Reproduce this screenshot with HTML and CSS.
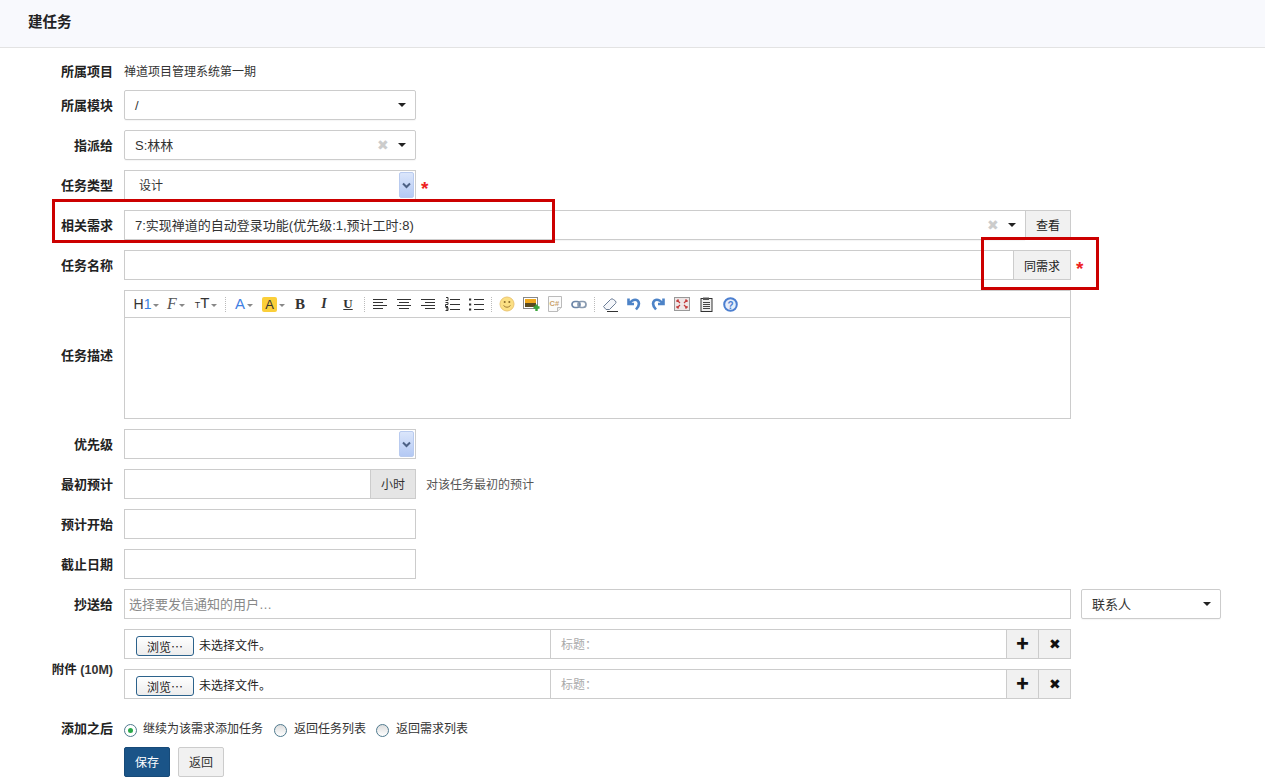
FILE: index.html
```html
<!DOCTYPE html>
<html lang="zh-CN">
<head>
<meta charset="utf-8">
<title>建任务</title>
<link rel="stylesheet" href="styles.css">
</head>
<body>
<header class="titlebar"><h1 class="title">建任务</h1></header>
<main class="form">
  <div class="label label-plain">所属项目</div>
  <div class="value-text">禅道项目管理系统第一期</div>

  <div class="label">所属模块</div>
  <div class="chosen narrow"><span class="chosen-text">/</span><span class="caret"></span></div>

  <div class="label">指派给</div>
  <div class="chosen narrow"><span class="chosen-text">S:林林</span><span class="clear">✖</span><span class="caret"></span></div>

  <div class="label">任务类型</div>
  <div class="line">
    <div class="native narrow"><span class="native-text">设计</span><span class="native-arrow"><svg width="9" height="7" viewBox="0 0 9 7"><path d="M1 1.500l3.500 3.500L8 1.500" fill="none" stroke="#4d6185" stroke-width="2"/></svg></span></div>
    <span class="req">*</span>
  </div>

  <div class="label">相关需求</div>
  <div class="group">
    <div class="chosen grow joined"><span class="chosen-text">7:实现禅道的自动登录功能(优先级:1,预计工时:8)</span><span class="clear">✖</span><span class="caret"></span></div>
    <div class="addon w46">查看</div>
  </div>

  <div class="label">任务名称</div>
  <div class="line">
    <div class="group">
      <div class="box grow joined"></div>
      <div class="addon w58">同需求</div>
    </div>
    <span class="req req-abs">*</span>
  </div>

  <div class="label label-editor">任务描述</div>
  <div class="editor">
    <div class="toolbar">
      <span class="tb wide"><span class="t-h">H<b>1</b></span><i class="mini"></i></span>
      <span class="tb wide"><span class="t-f">F</span><i class="mini"></i></span>
      <span class="tb wide"><span class="t-t"><small>T</small>T</span><i class="mini"></i></span>
      <span class="sep"></span>
      <span class="tb wide"><span class="t-a">A</span><i class="mini"></i></span>
      <span class="tb wide w29"><span class="t-hl">A</span><i class="mini"></i></span>
      <span class="tb"><span class="t-b">B</span></span>
      <span class="tb"><span class="t-i">I</span></span>
      <span class="tb"><span class="t-u">U</span></span>
      <span class="sep"></span>
      <span class="tb"><svg width="16" height="12" viewBox="0 0 16 12" class="ln"><path d="M1 1.500h14M1 4.500h10M1 7.500h14M1 10.500h10"/></svg></span>
      <span class="tb"><svg width="16" height="12" viewBox="0 0 16 12" class="ln"><path d="M1 1.500h14M3 4.500h10M1 7.500h14M3 10.500h10"/></svg></span>
      <span class="tb"><svg width="16" height="12" viewBox="0 0 16 12" class="ln"><path d="M1 1.500h14M5 4.500h10M1 7.500h14M5 10.500h10"/></svg></span>
      <span class="tb"><svg width="15" height="14" viewBox="0 0 15 14" class="ln"><path d="M5 2.500h10M5 7.500h10M5 12.500h10"/><path d="M1 .5h2v3M.5 3.500H3M.5 5.500h2.500v2H.5v2H3M.5 10.500H3v1.500H1M3 12v1.500H.5" stroke-width=".8"/></svg></span>
      <span class="tb"><svg width="15" height="14" viewBox="0 0 15 14" class="ln"><path d="M5 2.500h10M5 7.500h10M5 12.500h10"/><path d="M1 1.500v2M1 6.500v2M1 11.500v2" class="dots"/></svg></span>
      <span class="sep w7"></span>
      <span class="tb"><svg width="16" height="16" viewBox="0 0 16 16"><circle cx="8" cy="8" r="7" fill="#fbdf83" stroke="#ebc572"/><circle cx="5.700" cy="6" r="1" fill="#8a6a2a"/><circle cx="10.300" cy="6" r="1" fill="#8a6a2a"/><path d="M4.500 9.500q3.500 3.500 7 0" fill="none" stroke="#a07c35"/></svg></span>
      <span class="tb"><svg width="17" height="15" viewBox="0 0 17 15"><rect x=".5" y=".5" width="14" height="11" fill="#fff" stroke="#888"/><rect x="2" y="2" width="11" height="4" fill="#f0a81c"/><rect x="2" y="6" width="11" height="4" fill="#5a4a20"/><path d="M10.500 10.500h6M13.500 7.500v6.500" stroke="#3aa53a" stroke-width="2.400"/></svg></span>
      <span class="tb"><svg width="14" height="16" viewBox="0 0 14 16"><path d="M.5.500h13v11l-4 4h-9z" fill="#fbfbfb" stroke="#bbb"/><path d="M9.500 15.500v-4h4" fill="#eee" stroke="#bbb"/><text x="1.500" y="10" class="csharp">C#</text></svg></span>
      <span class="tb"><svg width="16" height="9" viewBox="0 0 16 9"><rect x="1" y="1.500" width="8" height="6" rx="3" fill="none" stroke="#6c86a8" stroke-width="1.700"/><rect x="7" y="1.500" width="8" height="6" rx="3" fill="none" stroke="#8a9bb0" stroke-width="1.700"/></svg></span>
      <span class="sep w7"></span>
      <span class="tb"><svg width="16" height="15" viewBox="0 0 16 15"><path d="M1.500 9.500l7-7q1.500-1.500 3 0l2 1.500q1 1.500 0 2.500l-6 6H4z" fill="#f4f6fa" stroke="#6b7c95"/><path d="M5 14.500h11" stroke="#333"/></svg></span>
      <span class="tb"><svg width="14" height="14" viewBox="0 0 14 14"><path d="M1.500 1.500v5.500h5.500M2 6.500Q7 1 10.500 3.500q3.500 3.500-1.500 9" fill="none" stroke="#4d83c7" stroke-width="2.600"/></svg></span>
      <span class="tb"><svg width="14" height="14" viewBox="0 0 14 14"><path d="M12.500 1.500v5.500H7M12 6.500Q7 1 3.500 3.500q-3.500 3.500 1.500 9" fill="none" stroke="#4d83c7" stroke-width="2.600"/></svg></span>
      <span class="tb"><svg width="16" height="14" viewBox="0 0 16 14"><rect x=".5" y=".5" width="15" height="13" fill="#eee6e6" stroke="#999"/><path d="M3 3l3 3M13 3l-3 3M3 11l3-3M13 11l-3-3M3 3h2M3 3v2M13 3h-2M13 3v2M3 11h2M3 11V9M13 11h-2M13 11V9" fill="none" stroke="#c43c3c" stroke-width="1.200"/></svg></span>
      <span class="tb"><svg width="14" height="15" viewBox="0 0 14 15"><rect x="2" y="1.500" width="11" height="13" fill="#f0f0f0" stroke="#333"/><rect x="4" y=".5" width="6" height="2.500" fill="#555"/><path d="M4 5.500h7M4 7.500h7M4 9.500h7M4 11.500h7" stroke="#444"/></svg></span>
      <span class="tb"><svg width="15" height="15" viewBox="0 0 15 15"><circle cx="7.500" cy="7.500" r="6.300" fill="#e6eefb" stroke="#4c7fd0" stroke-width="2"/><text x="4.500" y="11.500" class="help">?</text></svg></span>
    </div>
    <div class="editor-body"></div>
  </div>

  <div class="label">优先级</div>
  <div class="native narrow"><span class="native-text"></span><span class="native-arrow"><svg width="9" height="7" viewBox="0 0 9 7"><path d="M1 1.500l3.500 3.500L8 1.500" fill="none" stroke="#4d6185" stroke-width="2"/></svg></span></div>

  <div class="label">最初预计</div>
  <div class="line">
    <div class="group narrow">
      <div class="box grow joined"></div>
      <div class="addon addon-dark w46">小时</div>
    </div>
    <span class="hint">对该任务最初的预计</span>
  </div>

  <div class="label">预计开始</div>
  <div class="box narrow"></div>

  <div class="label">截止日期</div>
  <div class="box narrow"></div>

  <div class="label">抄送给</div>
  <div class="line line-wide">
    <div class="box grow-fixed placeholder">选择要发信通知的用户…</div>
    <div class="chosen contact"><span class="chosen-text">联系人</span><span class="caret"></span></div>
  </div>

  <div class="label label-span">附件 <span class="size">(10M)</span></div>
  <div class="file-row">
    <div class="file-cell"><span class="browse">浏览…</span><span>未选择文件。</span></div>
    <div class="file-title">标题：</div>
    <div class="addon w32 icon-btn">✚</div>
    <div class="addon w33 icon-btn icon-x">✖</div>
  </div>
  <div class="file-row">
    <div class="file-cell"><span class="browse">浏览…</span><span>未选择文件。</span></div>
    <div class="file-title">标题：</div>
    <div class="addon w32 icon-btn">✚</div>
    <div class="addon w33 icon-btn icon-x">✖</div>
  </div>

  <div class="label label-after">添加之后</div>
  <div class="radios">
    <span class="radio on"></span><span class="radio-text radio-first">继续为该需求添加任务</span>
    <span class="radio"></span><span class="radio-text">返回任务列表</span>
    <span class="radio"></span><span class="radio-text">返回需求列表</span>
  </div>

  <div class="actions">
    <span class="btn btn-primary">保存</span>
    <span class="btn">返回</span>
  </div>
</main>
<div class="mark mark-a"></div>
<div class="mark mark-b"></div>
</body>
</html>
```
FILE: styles.css
```css
* { box-sizing: border-box; }
html, body { margin: 0; height: 100%; overflow: hidden; }
body {
  position: relative;
  background: #fff;
  color: #333;
  font: 13px/20px "Liberation Sans", "Noto Sans CJK SC", sans-serif;
}
.titlebar {
  height: 48px;
  padding-left: 28px;
  background: #f8f9fd;
  border-bottom: 1px solid #e3e3e3;
  display: flex;
  align-items: center;
}
.title { margin: 0 0 3px; font-size: 14.500px; font-weight: 700; color: #222; }
.form {
  display: grid;
  grid-template-columns: 113px 947px;
  column-gap: 11px;
  row-gap: 10px;
  padding-top: 12px;
  align-items: center;
}
.label { font-weight: 700; text-align: right; font-size: 13px; color: #222; padding-top: 2px; }
.label-plain { height: 20px; }
.value-text { height: 20px; font-size: 12px; padding-top: 2px; }
.label-span { grid-row: span 2; padding-top: 12px; font-size: 12.500px; }
.size { color: #333; font-size: 12.500px; }
.narrow { width: 292px; }
.chosen, .box, .native {
  height: 30px;
  border: 1px solid #ccc;
  background: #fff;
}
.chosen {
  display: flex;
  align-items: center;
  padding: 0 10px 0 10px;
  border-radius: 2px;
  box-shadow: 0 1px 1px rgba(0,0,0,.04);
}
.chosen-text { flex: 1; padding-top: 1px; }
.caret {
  width: 0; height: 0;
  border-left: 4px solid transparent;
  border-right: 4px solid transparent;
  border-top: 4px solid #222;
  margin-left: 9px;
  margin-right: -1px;
}
.clear { color: #ccc; font-size: 14px; line-height: 14px; }
.native { display: flex; padding: 1px; }
.native-text { flex: 1; padding: 4px 0 0 13px; font-size: 12px; }
.native-arrow {
  width: 15px;
  display: flex; align-items: center; justify-content: center;
  border-radius: 2px;
  border: 1px solid #b9cbef;
  background: linear-gradient(#dbe6fb, #b4c9f4);
}
.line { display: flex; align-items: center; position: relative; }
.line-wide { width: 1097px; gap: 10px; }
.grow-fixed { width: 947px; flex: none; }
.req { color: #e22; font-size: 19px; line-height: 22px; margin-left: 5px; font-weight: 700; height: 15px; }
.req-abs { position: absolute; left: 952px; top: 8px; margin: 0; }
.group { display: flex; height: 30px; width: 947px; }
.group.narrow { width: 292px; }
.grow { flex: 1; min-width: 0; }
.joined { border-right: 0; border-radius: 0; }
.addon {
  height: 30px;
  border: 1px solid #ccc;
  background: #f1f1f1;
  display: flex; align-items: center; justify-content: center;
  font-size: 12px;
  flex: none;
  color: #222;
  padding-top: 1px;
}
.addon-dark { background: #e5e5e5; color: #333; }
.w46 { width: 46px; }
.w58 { width: 58px; padding-top: 3px; }
.w32 { width: 33px; }
.w33 { width: 33px; margin-left: -1px; }
.hint { margin-left: 10px; font-size: 12px; color: #555; padding-top: 1px; }
.label-editor { align-self: center; }
.editor { height: 129px; width: 947px; border: 1px solid #ccc; display: flex; flex-direction: column; }
.toolbar { height: 27px; border-bottom: 1px solid #ccc; display: flex; align-items: center; padding-left: 6px; flex: none; }
.editor-body { flex: 1; }
.tb { width: 24px; height: 20px; display: flex; align-items: center; justify-content: center; flex: none; color: #333; }
.wide { width: 30px; }
.w29 { width: 29px; }
.sep { width: 8px; height: 16px; flex: none; background: linear-gradient(#bbb 50%, transparent 50%) center/1px 2px repeat-y; }
.w7 { width: 7px; }
.mini {
  width: 0; height: 0; margin-left: 2px; margin-top: 2px;
  border-left: 3px solid transparent;
  border-right: 3px solid transparent;
  border-top: 3px solid #888;
}
.t-h { font-size: 14px; padding-left: 1px; }
.t-h b { font-weight: 400; color: #3a7fe0; }
.t-f { font: italic 16px "Liberation Serif", serif; color: #555; }
.t-t { font-size: 15px; }
.t-t small { font-size: 9px; }
.t-a { font-size: 15px; color: #3f7fe3; }
.t-hl { font-size: 13px; background: #fbcf3a; width: 15px; height: 15px; border-radius: 2px; line-height: 15px; text-align: center; }
.t-b { font: 700 15px "Liberation Serif", serif; }
.t-i { font: italic 700 14px "Liberation Serif", serif; }
.t-u { font: 700 13px "Liberation Serif", serif; text-decoration: underline; }
.ln path { fill: none; stroke: #333; stroke-width: 1; }
.ln .dots { stroke-width: 2.400; }
.csharp { font: 700 7.500px "Liberation Sans", sans-serif; fill: #c9a06a; }
.help { font: 700 10px "Liberation Sans", sans-serif; fill: #4c7fd0; }
.placeholder { padding-left: 4px; line-height: 30px; font-size: 13px; color: #888; }
.contact { width: 140px; flex: none; padding-left: 10px; }
.file-row { display: flex; width: 947px; height: 30px; border: 1px solid #ccc; border-right: 0; align-items: center; grid-column: 2; }
.file-row .addon { margin-top: -1px; margin-bottom: -1px; }
.file-cell { width: 425px; padding: 4px 0 0 11px; display: flex; align-items: center; font-size: 12px; color: #222; }
.browse {
  width: 58px; height: 20px; margin-right: 5px;
  border: 1px solid #2c628b; border-radius: 3px;
  background: linear-gradient(#fff, #ececec);
  display: flex; align-items: center; justify-content: center;
  font: 12px "Noto Sans CJK SC", sans-serif;
}
.file-title { flex: 1; height: 100%; border-left: 1px solid #ccc; padding-left: 10px; line-height: 30px; font-size: 12px; color: #aaa; }
.icon-btn { font-size: 13px; color: #111; padding-top: 0; }
.icon-x { font-size: 14px; }
.label-after { margin-top: 9px; padding-top: 0; }
.radios { display: flex; align-items: center; margin-top: 10px; font-size: 12px; }
.radio {
  width: 13px; height: 13px; border-radius: 50%; border: 1px solid #4f7a8e; flex: none;
  background: linear-gradient(#ddd, #fff);
  margin-left: 10px; margin-right: 7px; margin-top: 2px;
  display: flex; align-items: center; justify-content: center;
}
.radio:first-child { margin-left: 0; margin-right: 6px; }
.radio-first { margin-right: 1px; }
.radio.on { background: #fff; }
.radio.on::after { content: ""; width: 5px; height: 5px; border-radius: 50%; background: #2aa84a; }
.actions { grid-column: 2; display: flex; gap: 8px; margin-top: -2px; }
.btn {
  width: 46px; height: 30px;
  border: 1px solid #ccc; border-radius: 2px;
  background: #f1f1f1;
  display: flex; align-items: center; justify-content: center;
  font-size: 12px;
  padding-top: 2px;
}
.btn-primary { background: #1a5488; border-color: #174a78; color: #fff; }
.mark { position: absolute; border: 3px solid #cc0000; }
.mark-a { left: 52px; top: 199px; width: 503px; height: 44px; }
.mark-b { left: 981px; top: 237px; width: 118px; height: 53px; }
```
